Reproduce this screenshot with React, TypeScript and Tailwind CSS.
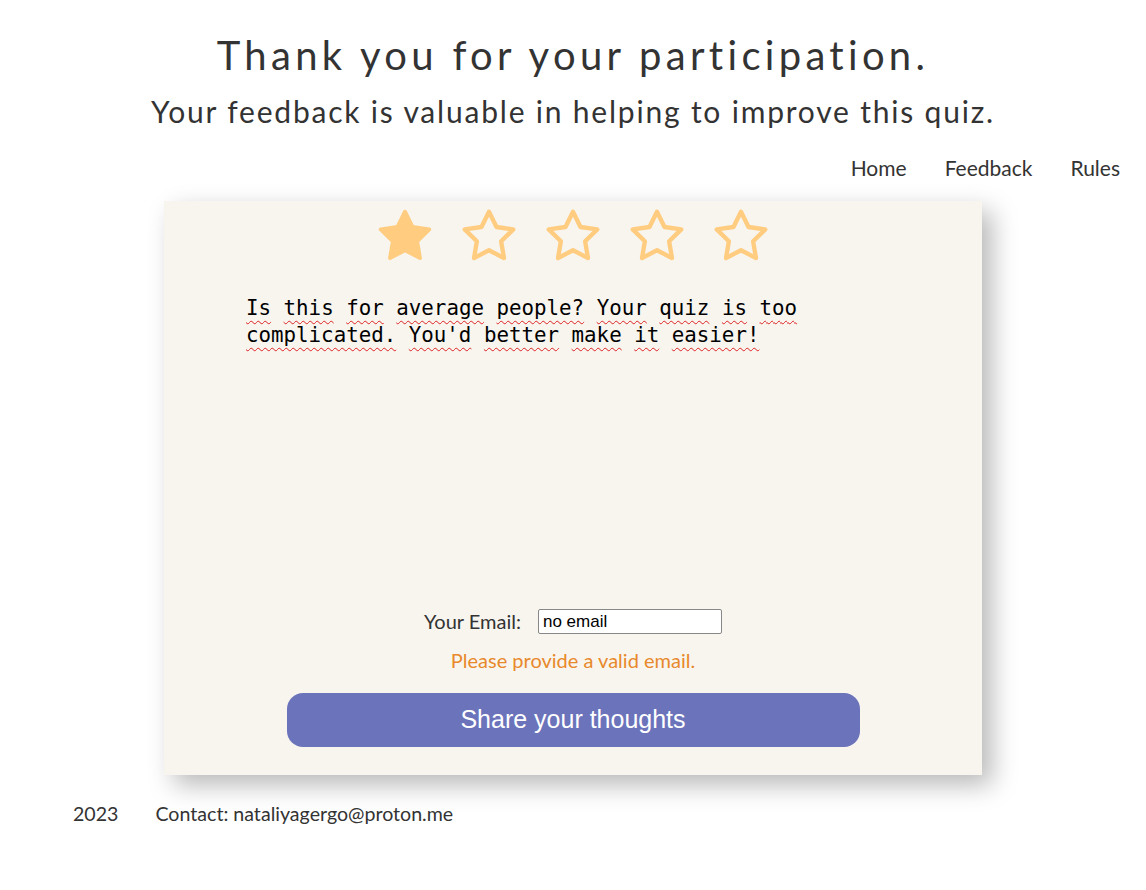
import React from 'react';

const words1 = ['Is', 'this', 'for', 'average', 'people?', 'Your', 'quiz', 'is', 'too'];
const words2 = ['complicated.', "You'd", 'better', 'make', 'it', 'easier!'];

const Star = ({ filled }: { filled: boolean }) => (
  <svg width="62" height="62" viewBox="0 0 24 24" className="shrink-0">
    <path
      d="M12 2.6l2.9 5.9 6.5.95-4.7 4.6 1.1 6.5L12 17.5l-5.8 3.05 1.1-6.5-4.7-4.6 6.5-.95z"
      fill={filled ? '#ffcc80' : 'none'}
      stroke="#ffcc80"
      strokeWidth={filled ? 1.5 : 1.7}
      strokeLinejoin="round"
    />
  </svg>
);

const Line = ({ words }: { words: string[] }) => (
  <div>
    {words.map((w, i) => (
      <React.Fragment key={i}>
        <span className="underline decoration-wavy decoration-[#d22] decoration-1 underline-offset-[5px]">{w}</span>
        {i < words.length - 1 ? ' ' : ''}
      </React.Fragment>
    ))}
  </div>
);

export default function App() {
  return (
    <div className="min-h-[890px] bg-white text-[#333] font-['Lato','Open_Sans',sans-serif]">
      <header className="pt-[30px] text-center">
        <h1 className="text-[40px] leading-[50px] tracking-[4.3px] font-normal">Thank you for your participation.</h1>
        <h2 className="mt-[12px] text-[30px] leading-[38px] tracking-[1.8px]">Your feedback is valuable in helping to improve this quiz.</h2>
      </header>

      <nav className="mt-[24px] flex justify-end gap-[38px] pr-[26px] text-[21px] leading-[28px]">
        <a href="#">Home</a>
        <a href="#">Feedback</a>
        <a href="#">Rules</a>
      </nav>

      <main className="mt-[19px] flex justify-center">
        <div className="w-[818px] h-[574px] bg-[#f8f5ef] shadow-[10px_10px_24px_rgba(0,0,0,0.28)] flex flex-col items-center">
          <div className="mt-[4px] flex gap-[22px]">
            <Star filled />
            <Star filled={false} />
            <Star filled={false} />
            <Star filled={false} />
            <Star filled={false} />
          </div>

          <div className="mt-[28px] w-[660px] h-[290px] self-start ml-[82px] font-['DejaVu_Sans_Mono',monospace] text-[20.8px] leading-[27px] text-black">
            <Line words={words1} />
            <Line words={words2} />
          </div>

          <div className="mt-[21px] flex items-center gap-[17px] text-[20px]">
            <label>Your Email:</label>
            <input
              defaultValue="no email"
              className="w-[184px] h-[25px] px-[4px] pt-[2px] bg-white border border-[#888] rounded-[2px] text-[17px] text-black font-['Liberation_Sans',Arial,sans-serif]"
            />
          </div>
          <p className="mt-[9px] text-[20px] text-[#e8892b]">Please provide a valid email.</p>

          <button className="mt-[18px] w-[573px] h-[54px] rounded-[16px] bg-[#6b73bb] text-white text-[25px] font-['Liberation_Sans',Arial,sans-serif]">
            Share your thoughts
          </button>
        </div>
      </main>

      <footer className="mt-[24px] flex gap-[37px] pl-[73px] text-[19.6px]">
        <span>2023</span>
        <span>Contact: nataliyagergo@proton.me</span>
      </footer>
    </div>
  );
}
